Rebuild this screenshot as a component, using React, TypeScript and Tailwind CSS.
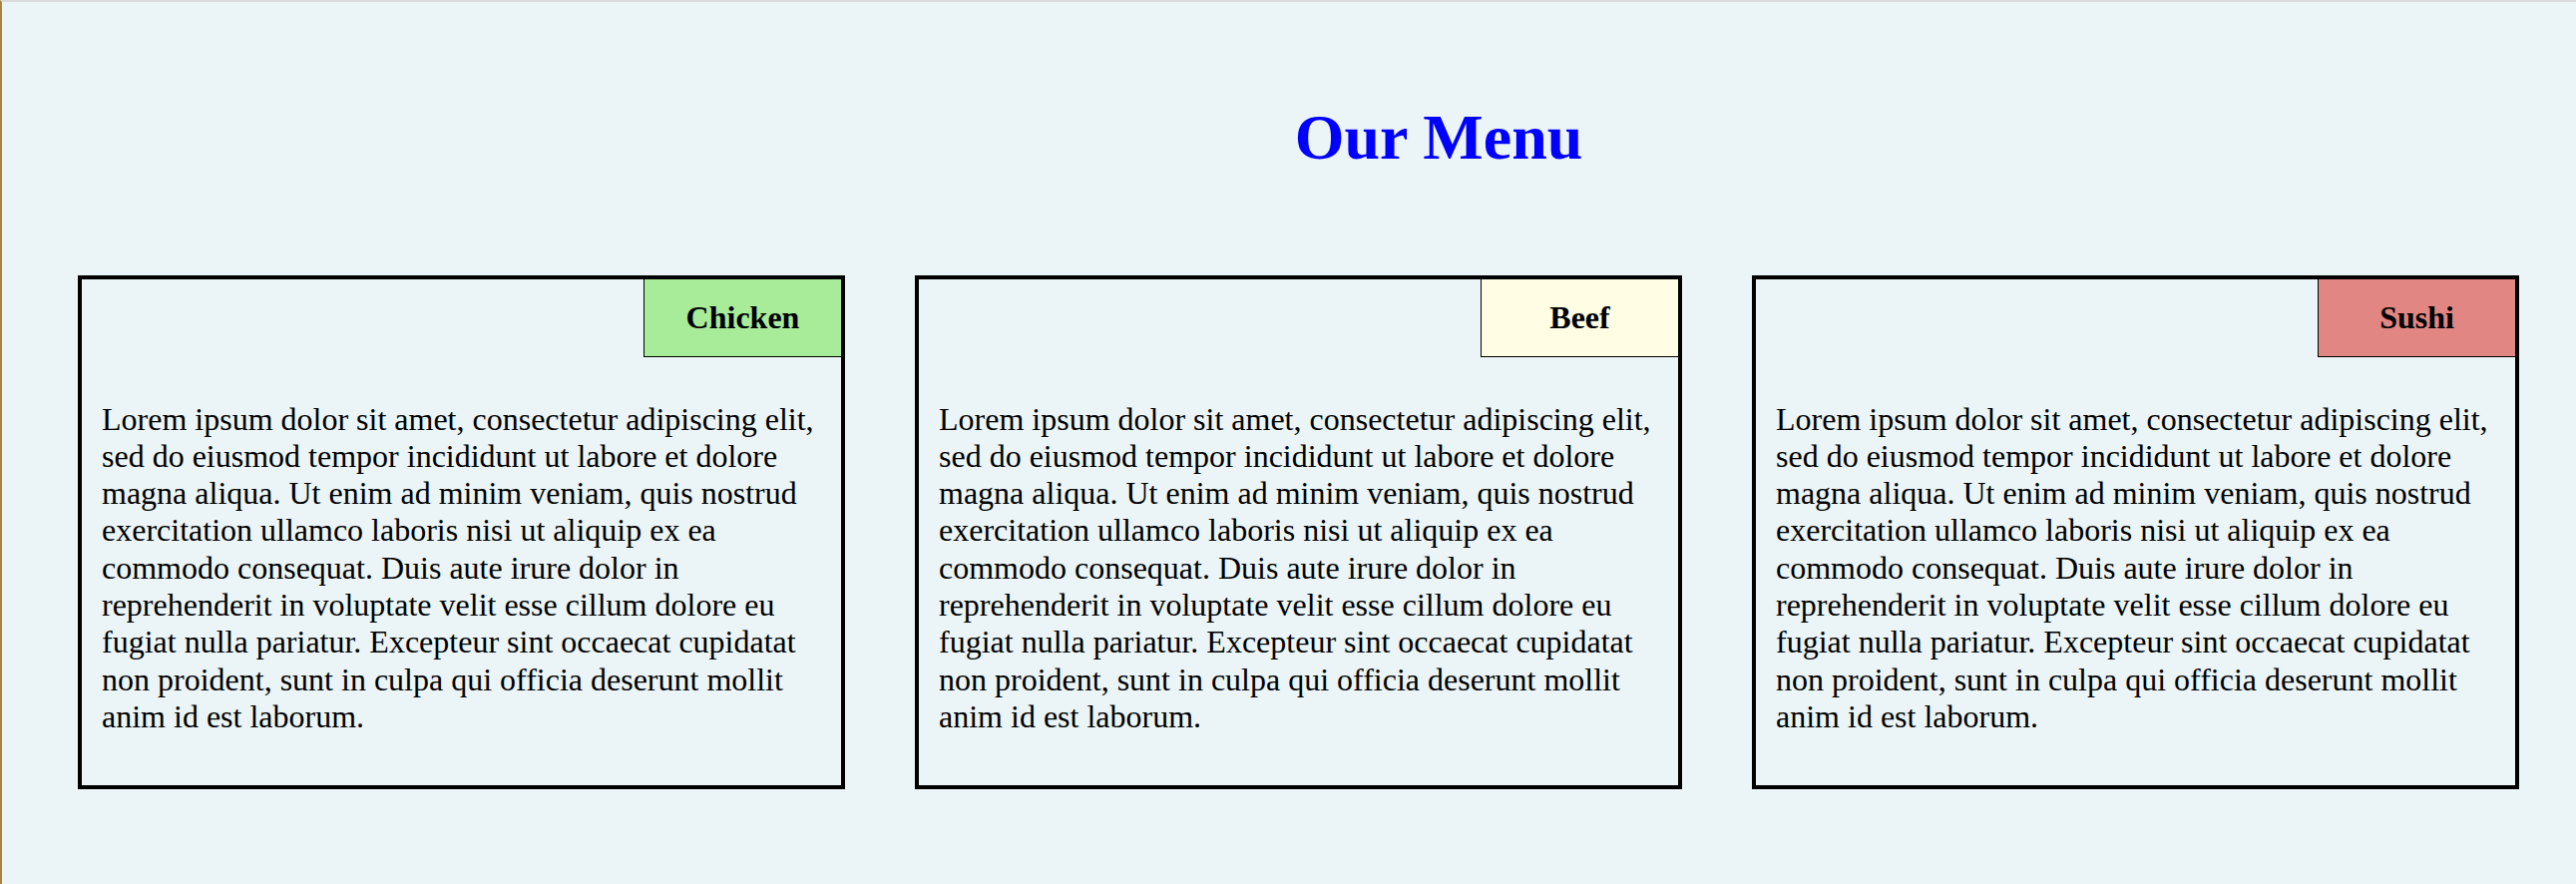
const LOREM =
  'Lorem ipsum dolor sit amet, consectetur adipiscing elit, sed do eiusmod tempor incididunt ut labore et dolore magna aliqua. Ut enim ad minim veniam, quis nostrud exercitation ullamco laboris nisi ut aliquip ex ea commodo consequat. Duis aute irure dolor in reprehenderit in voluptate velit esse cillum dolore eu fugiat nulla pariatur. Excepteur sint occaecat cupidatat non proident, sunt in culpa qui officia deserunt mollit anim id est laborum.';

const ITEMS = [
  { name: 'Chicken', tag: 'bg-[#a8ec9a]' },
  { name: 'Beef', tag: 'bg-[#fffee4]' },
  { name: 'Sushi', tag: 'bg-[#e18682]' },
];

function MenuCard({ name, tag }: { name: string; tag: string }) {
  return (
    <div className="w-[769px] h-[515px] border-4 border-black flex flex-col">
      <div className="flex justify-end">
        <div className={`w-[198px] h-[78px] border-l border-b border-black flex items-center justify-center text-[32px] font-bold ${tag}`}>
          {name}
        </div>
      </div>
      <p className="mt-[44px] px-[20px] text-[32px] leading-[37.3px]">{LOREM}</p>
    </div>
  );
}

export default function App() {
  return (
    <div className="min-h-screen bg-[#ebf5f7] border-t-2 border-t-[#d8dcdf] border-l-2 border-l-[#a8843c] font-['Liberation_Serif',serif] text-black">
      <h1 className="ml-[300px] pt-[99px] text-center text-[64px] font-bold leading-[1.15] text-[#0000ff]">
        Our Menu
      </h1>
      <div className="mt-[101px] pl-[76px] flex gap-[70px]">
        {ITEMS.map((item) => (
          <MenuCard key={item.name} {...item} />
        ))}
      </div>
    </div>
  );
}
